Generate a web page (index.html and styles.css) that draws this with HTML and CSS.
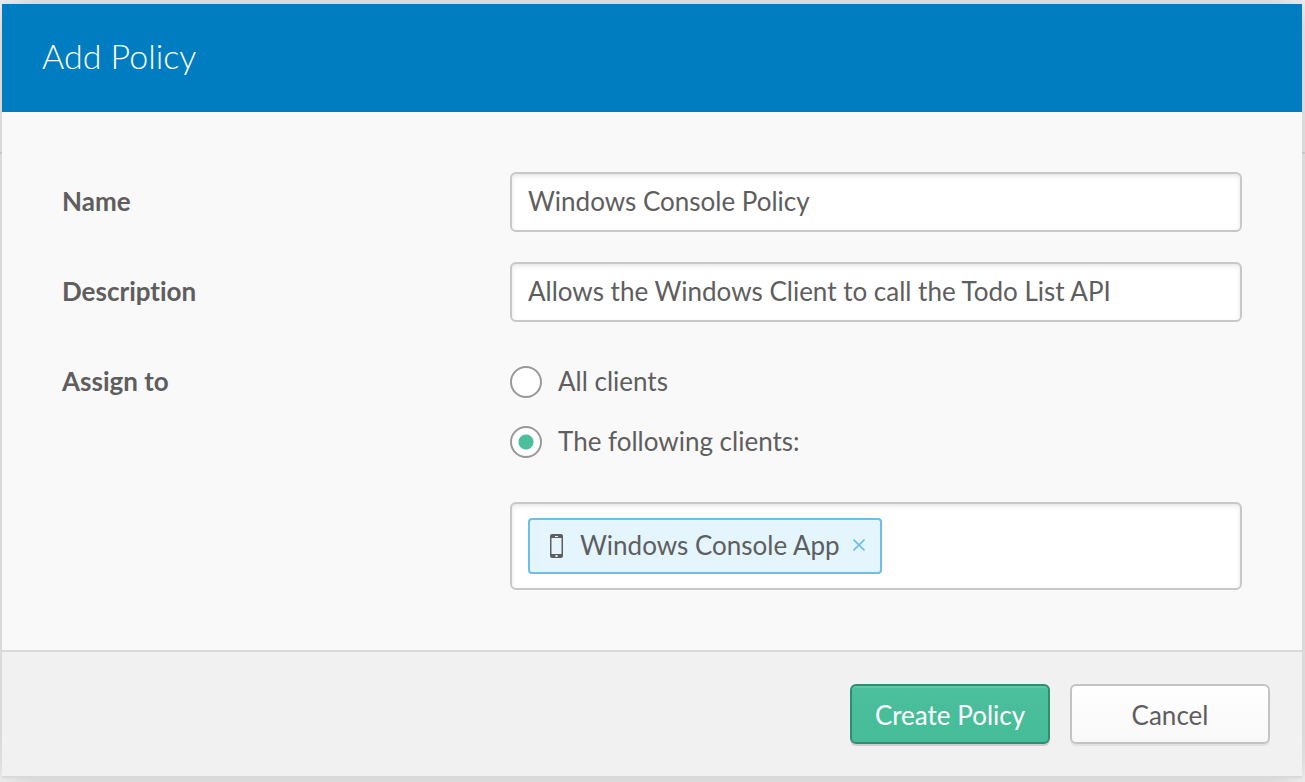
FILE: index.html
```html
<!DOCTYPE html>
<html lang="en">
<head>
<meta charset="utf-8">
<meta name="viewport" content="width=device-width, initial-scale=1">
<title>Add Policy</title>
<link rel="stylesheet" href="styles.css">
</head>
<body>
<form class="modal">
  <header class="modal-header">
    <h1 class="modal-title">Add Policy</h1>
  </header>
  <div class="modal-body">
    <div class="row">
      <label class="row-label" for="name">Name</label>
      <input class="field" id="name" type="text" value="Windows Console Policy">
    </div>
    <div class="row">
      <label class="row-label" for="description">Description</label>
      <input class="field" id="description" type="text" value="Allows the Windows Client to call the Todo List API">
    </div>
    <div class="row" role="radiogroup" aria-labelledby="assign">
      <span class="row-label" id="assign">Assign to</span>
      <div class="assign">
        <label class="option"><input class="radio" type="radio" name="assign" value="all"><span class="option-text">All clients</span></label>
        <label class="option"><input class="radio" type="radio" name="assign" value="some" checked><span class="option-text">The following clients:</span></label>
        <div class="picker">
          <span class="tag">
            <svg class="tag-icon" viewBox="0 0 14 24" aria-hidden="true">
              <path fill="#5e5e5e" fill-rule="evenodd" d="M2 0h9a2 2 0 0 1 2 2v20a2 2 0 0 1-2 2H2a2 2 0 0 1-2-2V2a2 2 0 0 1 2-2zM1.500 4v16h10V4zM5 2v1h3V2zM5.500 21v2h2v-2z"/>
            </svg>
            <span class="tag-text">Windows Console App</span>
            <button class="tag-remove" type="button" aria-label="Remove Windows Console App">
              <svg class="remove-icon" viewBox="0 0 12 12" aria-hidden="true">
                <path fill="none" stroke="#6dbee9" stroke-width="1.6" d="M.5.5l11 11M11.500.5l-11 11"/>
              </svg>
            </button>
          </span>
        </div>
      </div>
    </div>
  </div>
  <footer class="modal-footer">
    <button class="button button-primary" type="submit">Create Policy</button>
    <button class="button" type="button">Cancel</button>
  </footer>
</form>
</body>
</html>
```
FILE: styles.css
```css
* { box-sizing: border-box; }

body {
  margin: 0;
  padding: 4px 3px 4px 2px;
  min-height: 100vh;
  background: linear-gradient(#e4e4e4, #e4e4e4) 0 152px / 100% 2px no-repeat #f7f7f7;
  color: #5e5e5e;
  font-family: Lato, "Open Sans", sans-serif;
  font-size: 26px;
  font-variant-ligatures: none;
  line-height: 30px;
}

.modal {
  display: flex;
  flex-direction: column;
  min-height: calc(100vh - 8px);
  background: #f9f9f9;
  border-bottom: 2px solid #d9d9d9;
  box-shadow: 0 0 40px rgba(0, 0, 0, 0.25);
}

.modal-header {
  padding: 30px 40px 34px;
  background: #007dc1;
  color: #fff;
}

.modal-title {
  margin: 0;
  font-size: 34px;
  font-weight: 300;
  line-height: 44px;
}

.modal-body {
  display: flex;
  flex-direction: column;
  flex: 1;
  gap: 30px;
  padding: 60px;
}

.row {
  display: grid;
  grid-template-columns: 448px 1fr;
  align-items: start;
}

.row-label {
  padding: 14px 0;
  font-weight: 700;
}

.field,
.picker {
  width: 100%;
  border: 2px solid #c8c8c8;
  border-radius: 6px;
  background: #fff;
  box-shadow: inset 0 2px 4px rgba(0, 0, 0, 0.1);
}

.field {
  height: 60px;
  padding: 0 16px 2px;
  color: inherit;
  font: inherit;
  font-variant-ligatures: none;
}

.option {
  display: flex;
  align-items: center;
  gap: 16px;
  height: 60px;
}

.option-text,
.tag-text {
  padding-bottom: 2px;
}

.radio {
  appearance: none;
  width: 32px;
  height: 32px;
  margin: 0;
  border: 2px solid #999;
  border-radius: 50%;
  background: #fff;
}

.radio:checked {
  background: radial-gradient(circle, #4cbf9c 7px, #fff 8px);
}

.picker {
  display: flex;
  margin-top: 30px;
  padding: 14px 16px;
}

.tag {
  display: flex;
  align-items: center;
  height: 56px;
  padding: 0 15px 0 20px;
  border: 2px solid #6dbee9;
  border-radius: 4px;
  background: #e4f5fe;
}

.tag-icon {
  width: 14px;
  height: 24px;
  margin-right: 16px;
}

.tag-remove {
  display: flex;
  margin-left: 13px;
  padding: 0 0 2px;
  border: 0;
  background: none;
}

.remove-icon {
  width: 12px;
  height: 12px;
}

.modal-footer {
  display: flex;
  justify-content: flex-end;
  gap: 20px;
  padding: 32px;
  border-top: 2px solid #d9d9d9;
  background: #f1f1f1;
}

.button {
  min-width: 200px;
  height: 60px;
  padding: 2px 16px 0;
  border: 2px solid #c3c3c3;
  border-radius: 6px;
  background: linear-gradient(#fff, #f8f8f8);
  box-shadow: 0 2px 0 rgba(0, 0, 0, 0.06);
  color: inherit;
  font: inherit;
}

.button-primary {
  border-color: #2f8e72;
  background: linear-gradient(#4cbf9c, #46bc98);
  box-shadow: 0 2px 0 rgba(0, 0, 0, 0.15), inset 0 2px 0 rgba(255, 255, 255, 0.12);
  color: #fff;
}
```
